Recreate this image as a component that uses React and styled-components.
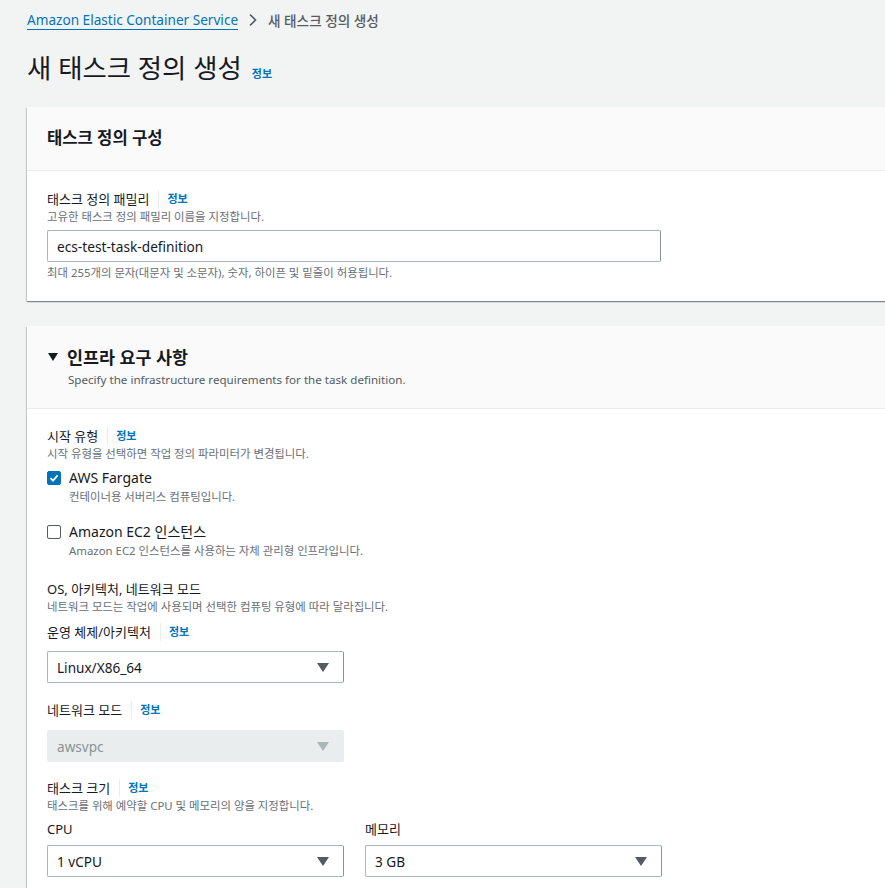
import React from 'react';
import styled, { createGlobalStyle } from 'styled-components';

const GlobalStyle = createGlobalStyle`
  html, body {
    margin: 0;
    padding: 0;
    background: #f2f3f3;
    font-family: "Noto Sans", "Noto Sans CJK KR", sans-serif;
    color: #16191f;
  }
`;

const Page = styled.div`
  width: 920px;
  padding: 8px 0 40px 27px;
  box-sizing: border-box;
`;

const Breadcrumbs = styled.nav`
  display: flex;
  align-items: center;
  gap: 8px;
  font-size: 13.6px;
  height: 24px;
`;

const CrumbLink = styled.a`
  color: #0073bb;
  text-decoration: none;
  border-bottom: 1px solid #0073bb;
  line-height: 18px;
`;

const CrumbCurrent = styled.span`
  color: #545b64;
  font-weight: 500;
`;

const Chevron = styled.svg`
  width: 14px;
  height: 16px;
`;

const TitleRow = styled.div`
  display: flex;
  align-items: baseline;
  gap: 10px;
  margin: 20px 0 23px;
`;

const Title = styled.h1`
  margin: 0;
  font-size: 26.4px;
  font-weight: 400;
  line-height: 32px;
`;

const Info = styled.a`
  color: #0073bb;
  font-size: 11px;
  font-weight: 700;
  text-decoration: none;
`;

const Card = styled.section`
  background: #fff;
  box-shadow: 0 1px 1px 0 rgba(0, 28, 36, 0.3), 1px 1px 1px 0 rgba(0, 28, 36, 0.15),
    -1px 1px 1px 0 rgba(0, 28, 36, 0.15);
  margin-bottom: 25px;
`;

const CardHeader = styled.header`
  background: #fafafa;
  border-bottom: 1px solid #eaeded;
  padding: ${p => (p.$tall ? '19px 20px 19px' : '19px 20px 20px')};
`;

const CardTitle = styled.h2`
  margin: 0;
  font-size: ${p => (p.$big ? '17.4px' : '16.6px')};
  font-weight: 700;
  line-height: 24px;
  display: flex;
  align-items: center;
  gap: 9px;
`;

const Caret = styled.span`
  width: 0;
  height: 0;
  border-left: 5px solid transparent;
  border-right: 5px solid transparent;
  border-top: 8px solid #16191f;
  margin-left: 1px;
`;

const HeaderDesc = styled.p`
  margin: 2px 0 0 21px;
  font-size: 11.6px;
  color: #545b64;
  line-height: 18px;
`;

const CardBody = styled.div`
  padding: ${p => p.$top || 17}px 20px 20px;
  display: flex;
  flex-direction: column;
`;

const Field = styled.div`
  display: flex;
  flex-direction: column;
  margin-bottom: ${p => p.$mb || 0}px;
`;

const LabelRow = styled.div`
  display: flex;
  align-items: center;
  font-size: 13px;
  line-height: 20px;
  color: #16191f;
`;

const Sep = styled.span`
  width: 1px;
  height: 18px;
  background: #eaeded;
  margin: 0 8px 0 9px;
`;

const Desc = styled.div`
  font-size: 11.4px;
  line-height: 16px;
  color: #687078;
`;

const Input = styled.div`
  width: 614px;
  height: 32px;
  box-sizing: border-box;
  border: 1px solid #aab7b8;
  border-right-color: #879596;
  border-radius: 2px;
  font-size: 13.7px;
  padding: 0 9px;
  display: flex;
  align-items: center;
  margin: 5px 0 3px;
`;

const SelectBox = styled.div`
  width: 297px;
  height: 32px;
  margin-top: ${p => p.$gap}px;
  box-sizing: border-box;
  border: 1px solid ${p => (p.$disabled ? '#eaeded' : '#aab7b8')};
  border-right-color: ${p => (p.$disabled ? '#eaeded' : '#879596')};
  background: ${p => (p.$disabled ? '#eaeded' : '#fff')};
  color: ${p => (p.$disabled ? '#879596' : '#16191f')};
  border-radius: 2px;
  font-size: 13.6px;
  padding: 0 14px 0 9px;
  display: flex;
  align-items: center;
  justify-content: space-between;
`;

const Arrow = styled.span`
  width: 0;
  height: 0;
  border-left: 6px solid transparent;
  border-right: 6px solid transparent;
  border-top: 9px solid ${p => (p.$disabled ? '#aab7b8' : '#545b64')};
`;

const CheckRow = styled.label`
  display: flex;
  gap: 8px;
  align-items: flex-start;
  margin-bottom: ${p => p.$mb || 0}px;
`;

const Box = styled.span`
  width: 14px;
  height: 14px;
  margin-top: 3px;
  flex: none;
  box-sizing: border-box;
  border-radius: 2px;
  border: 1px solid ${p => (p.$checked ? '#0073bb' : '#545b64')};
  background: ${p => (p.$checked ? '#0073bb' : '#fff')};
  display: flex;
  align-items: center;
  justify-content: center;
`;

const CheckText = styled.div`
  display: flex;
  flex-direction: column;
`;

const CheckLabel = styled.span`
  font-size: 14px;
  line-height: 20px;
  margin-bottom: 1px;
`;

const Row = styled.div`
  display: flex;
  gap: 21px;
`;

const Label = ({ children, info }) => (
  <LabelRow>
    {children}
    {info && (
      <>
        <Sep />
        <Info>정보</Info>
      </>
    )}
  </LabelRow>
);

const Select = ({ value, disabled, gap = 8 }) => (
  <SelectBox $disabled={disabled} $gap={gap}>
    <span>{value}</span>
    <Arrow $disabled={disabled} />
  </SelectBox>
);

const Check = ({ checked, label, desc, mb }) => (
  <CheckRow $mb={mb}>
    <Box $checked={checked}>
      {checked && (
        <svg width="10" height="10" viewBox="0 0 10 10">
          <path d="M1.5 5.2 L4 7.6 L8.6 2.4" fill="none" stroke="#fff" strokeWidth="1.8" />
        </svg>
      )}
    </Box>
    <CheckText>
      <CheckLabel>{label}</CheckLabel>
      <Desc>{desc}</Desc>
    </CheckText>
  </CheckRow>
);

export default function App() {
  return (
    <>
      <GlobalStyle />
      <Page>
        <Breadcrumbs>
          <CrumbLink>Amazon Elastic Container Service</CrumbLink>
          <Chevron viewBox="0 0 14 16">
            <path d="M4 2.5 L9.5 8 L4 13.5" fill="none" stroke="#545b64" strokeWidth="1.6" />
          </Chevron>
          <CrumbCurrent>새 태스크 정의 생성</CrumbCurrent>
        </Breadcrumbs>

        <TitleRow>
          <Title>새 태스크 정의 생성</Title>
          <Info>정보</Info>
        </TitleRow>

        <Card>
          <CardHeader>
            <CardTitle>태스크 정의 구성</CardTitle>
          </CardHeader>
          <CardBody $top={18}>
            <Field>
              <Label info>태스크 정의 패밀리</Label>
              <Desc>고유한 태스크 정의 패밀리 이름을 지정합니다.</Desc>
              <Input>ecs-test-task-definition</Input>
              <Desc>최대 255개의 문자(대문자 및 소문자), 숫자, 하이픈 및 밑줄이 허용됩니다.</Desc>
            </Field>
          </CardBody>
        </Card>

        <Card>
          <CardHeader $tall>
            <CardTitle $big>
              <Caret />
              인프라 요구 사항
            </CardTitle>
            <HeaderDesc>Specify the infrastructure requirements for the task definition.</HeaderDesc>
          </CardHeader>
          <CardBody>
            <Field $mb={6}>
              <Label info>시작 유형</Label>
              <Desc>시작 유형을 선택하면 작업 정의 파라미터가 변경됩니다.</Desc>
            </Field>
            <Check checked label="AWS Fargate" desc="컨테이너용 서버리스 컴퓨팅입니다." mb={17} />
            <Check label="Amazon EC2 인스턴스" desc="Amazon EC2 인스턴스를 사용하는 자체 관리형 인프라입니다." mb={20} />

            <Field $mb={7}>
              <LabelRow>OS, 아키텍처, 네트워크 모드</LabelRow>
              <Desc>네트워크 모드는 작업에 사용되며 선택한 컴퓨팅 유형에 따라 달라집니다.</Desc>
            </Field>
            <Field $mb={17}>
              <Label info>운영 체제/아키텍처</Label>
              <Select value="Linux/X86_64" gap={9} />
            </Field>
            <Field $mb={16}>
              <Label info>네트워크 모드</Label>
              <Select value="awsvpc" disabled gap={10} />
            </Field>

            <Field $mb={5}>
              <Label info>태스크 크기</Label>
              <Desc>태스크를 위해 예약할 CPU 및 메모리의 양을 지정합니다.</Desc>
            </Field>
            <Row>
              <Field>
                <LabelRow>CPU</LabelRow>
                <Select value="1 vCPU" gap={6} />
              </Field>
              <Field>
                <LabelRow>메모리</LabelRow>
                <Select value="3 GB" gap={6} />
              </Field>
            </Row>
          </CardBody>
        </Card>
      </Page>
    </>
  );
}
